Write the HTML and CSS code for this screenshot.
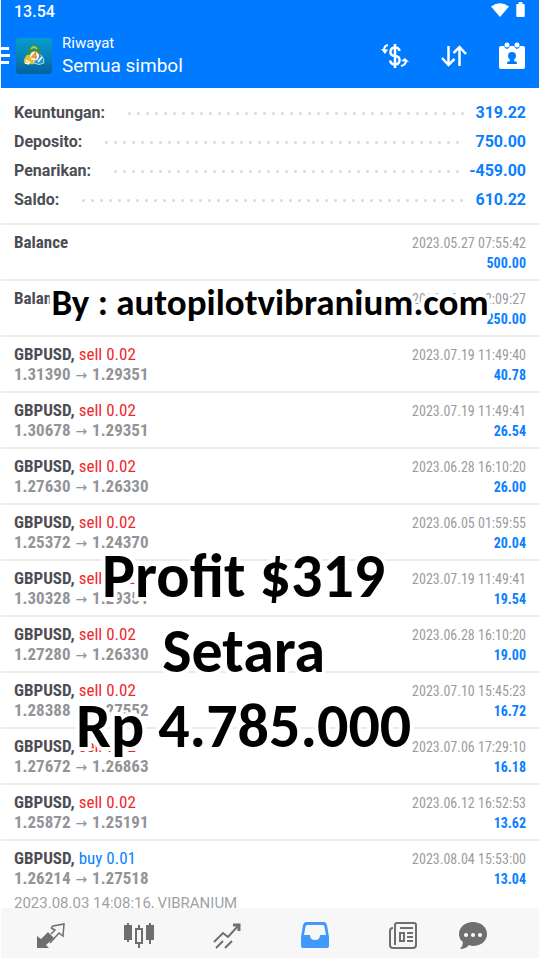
FILE: index.html
```
<!DOCTYPE html>
<html lang="id">
<head>
<meta charset="utf-8">
<meta name="viewport" content="width=device-width, initial-scale=1">
<title>Riwayat</title>
<link rel="stylesheet" href="styles.css">
</head>
<body>
<div class="app">
  <header class="header">
    <div class="status">
      <span>13.54</span>
      <span class="status-icons">
        <svg width="18" height="14" viewBox="0 0 18 14" fill="#fff"><path d="M0 3.500Q9-3 18 3.500L9 14Z"/></svg>
        <svg width="9" height="15" viewBox="0 0 9 16" fill="#fff"><path d="M2.500 0h4v2H8q1 0 1 1v12q0 1-1 1H1q-1 0-1-1V3q0-1 1-1h1.500z"/></svg>
      </span>
    </div>
    <div class="toolbar">
      <button class="menu" aria-label="Menu"><svg width="9" height="18" viewBox="0 0 9 18" fill="#fff"><path d="M0 0h8v3H0zM0 7h9v3H0zM0 14h8v3H0z"/></svg></button>
      <svg class="logo" width="36" height="36" viewBox="0 0 36 36">
        <defs><linearGradient id="sky" x2="0" y2="1"><stop stop-color="#079ccb"/><stop offset=".5" stop-color="#0783bd"/><stop offset="1" stop-color="#05609e"/></linearGradient></defs>
        <rect width="36" height="36" rx="3" fill="url(#sky)"/>
        <path d="M8 25q-1-5 4-9l6 4 1 6q-6 1-11-1z" fill="#d9c32f"/>
        <path d="M28 25q1-5-4-9l-5 4-1 5q5 3 10 0z" fill="#2696d5" stroke="#9bd7ef"/>
        <path d="M11 17Q12 7 18 7t7 10l-4-1-3-4-4 4z" fill="#36923f"/>
        <path d="M15 11q3-4 6 0" fill="none" stroke="#9ccb62" stroke-width="2"/>
        <path d="M10 22l4 3M9 25l4 1M22 24l4-5" stroke="#fff" stroke-width="1.500"/>
        <circle cx="18.500" cy="18" r="4.500" fill="#fff2df"/>
        <path d="M19.500 21v-6l-3.500 4h5" fill="none" stroke="#ec8a35" stroke-width="1.500"/>
      </svg>
      <div class="titles"><p class="subtitle">Riwayat</p><h1>Semua simbol</h1></div>
      <div class="actions">
        <button aria-label="Mata uang"><svg width="28" height="24" viewBox="0 0 28 24" fill="none" stroke="#fff" stroke-width="2.500"><path d="M18.500 7Q18 3.500 14 3.500T9.500 7.500 14 12t4.500 4.500-4.500 4T9 16.500M14 0v24"/><path d="M3 6q0-4 4-5" stroke-width="2"/><path d="M0 5l7 0.500L4 10z" fill="#fff" stroke="none"/><path d="M25 16q0 5-5 6" stroke-width="2"/><path d="M20 17l4-3 4 4z" fill="#fff" stroke="none"/></svg></button>
        <button aria-label="Urutkan"><svg width="26" height="22" viewBox="0 0 26 22" fill="none" stroke="#fff" stroke-width="2.500"><path d="M7.500 1v19M1 13l6.500 7 6-6M18.500 21V2M12.500 8l6-6L25 9"/></svg></button>
        <button aria-label="Periode"><svg width="26" height="27" viewBox="0 0 26 27"><path d="M2 4h3q1 3 3 3t3-3h4q1 3 3 3t3-3h3q2 0 2 2v19q0 2-2 2H2q-2 0-2-2V6q0-2 2-2z" fill="#fff"/><circle cx="8" cy="3" r="2.500" fill="#fff"/><circle cx="18" cy="3" r="2.500" fill="#fff"/><path d="M13 10q4 0 4 4 0 2-2 4v1q3 0 3 3H8q0-3 3-3v-1q-2-2-2-4 0-4 4-4z" fill="#007aff"/></svg></button>
      </div>
    </div>
  </header>

  <main class="content">
    <dl class="summary">
      <div><dt>Keuntungan:</dt><dd>319.22</dd></div>
      <div><dt>Deposito:</dt><dd>750.00</dd></div>
      <div><dt>Penarikan:</dt><dd>-459.00</dd></div>
      <div><dt>Saldo:</dt><dd>610.22</dd></div>
    </dl>
    <ul class="deals">
      <li><div><p class="name">Balance</p></div><div class="right"><time>2023.05.27 07:55:42</time><b>500.00</b></div></li>
      <li><div><p class="name">Balance</p></div><div class="right"><time>2023.06.13 12:09:27</time><b>250.00</b></div></li>
      <li><div><p class="name">GBPUSD, <span class="sell">sell 0.02</span></p><p class="price">1.31390 <i>→</i> 1.29351</p></div><div class="right"><time>2023.07.19 11:49:40</time><b>40.78</b></div></li>
      <li><div><p class="name">GBPUSD, <span class="sell">sell 0.02</span></p><p class="price">1.30678 <i>→</i> 1.29351</p></div><div class="right"><time>2023.07.19 11:49:41</time><b>26.54</b></div></li>
      <li><div><p class="name">GBPUSD, <span class="sell">sell 0.02</span></p><p class="price">1.27630 <i>→</i> 1.26330</p></div><div class="right"><time>2023.06.28 16:10:20</time><b>26.00</b></div></li>
      <li><div><p class="name">GBPUSD, <span class="sell">sell 0.02</span></p><p class="price">1.25372 <i>→</i> 1.24370</p></div><div class="right"><time>2023.06.05 01:59:55</time><b>20.04</b></div></li>
      <li><div><p class="name">GBPUSD, <span class="sell">sell 0.02</span></p><p class="price">1.30328 <i>→</i> 1.29351</p></div><div class="right"><time>2023.07.19 11:49:41</time><b>19.54</b></div></li>
      <li><div><p class="name">GBPUSD, <span class="sell">sell 0.02</span></p><p class="price">1.27280 <i>→</i> 1.26330</p></div><div class="right"><time>2023.06.28 16:10:20</time><b>19.00</b></div></li>
      <li><div><p class="name">GBPUSD, <span class="sell">sell 0.02</span></p><p class="price">1.28388 <i>→</i> 1.27552</p></div><div class="right"><time>2023.07.10 15:45:23</time><b>16.72</b></div></li>
      <li><div><p class="name">GBPUSD, <span class="sell">sell 0.02</span></p><p class="price">1.27672 <i>→</i> 1.26863</p></div><div class="right"><time>2023.07.06 17:29:10</time><b>16.18</b></div></li>
      <li><div><p class="name">GBPUSD, <span class="sell">sell 0.02</span></p><p class="price">1.25872 <i>→</i> 1.25191</p></div><div class="right"><time>2023.06.12 16:52:53</time><b>13.62</b></div></li>
      <li><div><p class="name">GBPUSD, <span class="buy">buy 0.01</span></p><p class="price">1.26214 <i>→</i> 1.27518</p><p class="note">2023.08.03 14:08:16, VIBRANIUM</p></div><div class="right"><time>2023.08.04 15:53:00</time><b>13.04</b></div></li>
    </ul>
  </main>

  <nav class="tabs">
    <button aria-label="Kuotasi"><svg width="28" height="26" viewBox="0 0 28 26"><path d="M0 25V13l4 3 7-7 6 6-8 7 3 3z" fill="#6f6f6f"/><path d="M14 5l2-2 11-2-1 12-4-3-9 10M14 5l4 2-4 4" fill="none" stroke="#6f6f6f" stroke-width="1.500"/></svg></button>
    <button aria-label="Grafik"><svg width="30" height="26" viewBox="0 0 30 26" fill="#6f6f6f"><path d="M0 2h3V0h2v2h3v15H5v2H3v-2H0zM22 2h3V0h2v2h3v15h-3v4h-2v-4h-3z"/><path d="M15 2v4M12 6h6v14h-6zM15 20v5" fill="none" stroke="#6f6f6f" stroke-width="2"/></svg></button>
    <button aria-label="Trading"><svg width="28" height="26" viewBox="0 0 28 26" fill="none" stroke="#6f6f6f" stroke-width="2"><path d="M1 19l9-9 5 4L25 3M3 25l7-7M12 25l7-7" /><path d="M20 2h6v6" stroke-width="3"/></svg></button>
    <button aria-label="Riwayat"><svg width="28" height="27" viewBox="0 0 28 27"><path fill-rule="evenodd" d="M5 0h18q2 0 3 3l2 12v9q0 2-2 2H2q-2 0-2-2v-9L2 3q1-3 3-3zM6 3q-1 0-1.500 2L3 13h6q0 5 5 5t5-5h6L23.500 5Q23 3 22 3z" fill="#4299fc"/></svg></button>
    <button aria-label="Berita"><svg width="28" height="27" viewBox="0 0 28 27" fill="none" stroke="#6f6f6f" stroke-width="2"><path d="M6 23V3q0-2 2-2h17q2 0 2 2v20q0 3-3 3H4q-3 0-3-3V9q0-3 3-3"/><path d="M11 6h13M11 11h4v8h-4zM18 11h6M18 15h6M18 19h6"/></svg></button>
    <button aria-label="Obrolan"><svg width="28" height="27" viewBox="0 0 28 27"><path d="M14 0c8 0 14 5 14 12s-6 12-14 12q-2 0-4-1-3 4-9 4 3-3 3-7Q0 17 0 12C0 5 6 0 14 0z" fill="#6f6f6f"/><g fill="#fff"><circle cx="7" cy="13" r="2"/><circle cx="14" cy="13" r="2"/><circle cx="21" cy="13" r="2"/></g></svg></button>
  </nav>

  <p class="caption byline">By : autopilotvibranium.com</p>
  <p class="caption result">Profit $319<br>Setara<br>Rp 4.785.000</p>
</div>
</body>
</html>
```
FILE: styles.css
```
* { box-sizing: border-box; }
body { margin: 0; background: #fff; font-family: Roboto, "Liberation Sans", sans-serif; }
p, h1, dl, dd, ul { margin: 0; padding: 0; }
button { border: 0; padding: 0; background: none; display: flex; align-items: center; justify-content: center; }
svg { display: block; }

.app { position: relative; display: flex; flex-direction: column; height: 100vh; padding: 0 1px; overflow: hidden; }

.header { background: #007aff; color: #fff; padding-bottom: 10px; }
.status { display: flex; justify-content: space-between; align-items: flex-start; padding: 2px 14px 0 13px; font-size: 16px; font-weight: 500; line-height: 20px; }
.status-icons { display: flex; align-items: center; gap: 7px; }
.toolbar { display: flex; align-items: center; padding-top: 11px; }
.menu { width: 9px; }
.logo { margin: 0 10px 0 6px; }
.titles { flex: 1; }
.subtitle { font-size: 15px; line-height: 20px; }
h1 { font-size: 19px; line-height: 25px; font-weight: 400; }
.actions { display: flex; align-items: center; gap: 32px; margin-right: 14px; }

.content { flex: 1; min-height: 0; overflow: hidden; }
.summary { padding: 10px 13px 9px; font-size: 16px; font-weight: 700; line-height: 29px; }
.summary div { display: flex; }
.summary div::after { content: ""; order: 1; flex: 1; height: 3px; margin: 14px 10px 0 20px; background: radial-gradient(circle, #dcdcde 1px, transparent 2px) 0 0 / 9px 3px repeat-x; }
dt { color: #4d4d55; }
dd { order: 2; color: #0a7fff; }

.deals { list-style: none; }
.deals li { display: flex; justify-content: space-between; height: 56px; padding: 7px 13px 0; border-top: 2px solid #ebebec; font-family: "Roboto Condensed", Roboto, sans-serif; font-size: 17px; line-height: 20px; white-space: nowrap; }
.name { color: #4d4d55; font-weight: 700; }
.name span { font-weight: 400; }
.sell { color: #f0262b; }
.buy { color: #0a7fff; }
.price { color: #929499; font-weight: 700; }
.price i { padding: 0 1px; font: 400 14px "DejaVu Sans", sans-serif; }
.note { margin-top: 6px; color: #a0a1a5; font-family: Roboto, sans-serif; font-size: 15px; line-height: 18px; }
.right { padding-top: 1px; text-align: right; font-size: 14px; }
time { display: block; color: #9b9ca1; }
.right b { color: #0a7fff; }

.tabs { display: flex; height: 50px; padding: 5px 40px 0 6px; background: #f7f7f7; }
.tabs button { flex: 88; }
.tabs button:last-child { flex: 52; }

.caption { position: absolute; color: #000; font-family: Carlito, Calibri, Lato, sans-serif; font-weight: 700; text-align: center; white-space: nowrap; paint-order: stroke fill; -webkit-text-stroke: 8px #fff; }
.byline { top: 281px; left: 0; right: 0; font-size: 37px; line-height: 44px; }
.result { top: 539px; left: 76px; font-size: 62px; line-height: 75px; }
```
